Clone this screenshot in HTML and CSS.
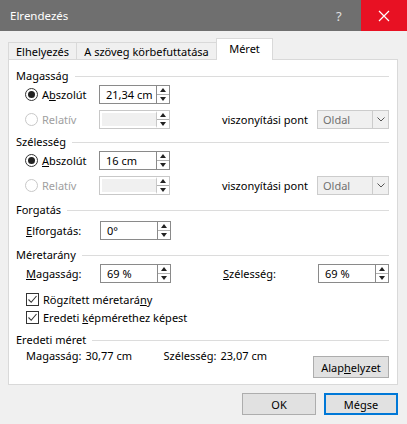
FILE: index.html
```html
<!DOCTYPE html>
<html lang="hu">

<head>
    <meta charset="UTF-8">
    <title>Elrendezés</title>
    <link rel="stylesheet" href="styles.css">
</head>

<body>
    <div class="window">
        <!-- Title bar -->
        <div class="titlebar">
            <span class="title">Elrendezés</span>
            <span class="help">?</span>
            <span class="close">
                <svg width="12" height="12" viewBox="0 0 12 12">
                    <path d="M1 1 L11 11 M11 1 L1 11" stroke="#fff" stroke-width="1.2" fill="none" />
                </svg>
            </span>
        </div>

        <div class="content">
            <!-- Tabs -->
            <div class="tabs">
                <div class="tab tab-first">Elhelyezés</div>
                <div class="tab">A szöveg körbefuttatása</div>
                <div class="tab active">Méret</div>
            </div>

            <div class="panel">
                <!-- Magasság -->
                <div class="group-title"><span>Magasság</span><i></i></div>
                <div class="row">
                    <span class="radio checked"></span>
                    <span class="lbl">A<u>b</u>szolút</span>
                    <div class="spin"><span class="field">21,34 cm</span><span class="arrows"><b class="up"></b><b class="down"></b></span></div>
                </div>
                <div class="row row-gap">
                    <span class="radio disabled"></span>
                    <span class="lbl disabled-text">Relatív</span>
                    <div class="spin off"><span class="field"></span><span class="arrows"><b class="up"></b><b class="down"></b></span></div>
                    <span class="rel-label">viszonyítási pont</span>
                    <div class="select"><span>Oldal</span><span class="drop"><svg width="8" height="5" viewBox="0 0 8 5"><path d="M0.5 0.5 L4 4 L7.5 0.5" stroke="#555" fill="none" /></svg></span></div>
                </div>

                <!-- Szélesség -->
                <div class="group-title gt-second"><span>Szélesség</span><i></i></div>
                <div class="row">
                    <span class="radio checked"></span>
                    <span class="lbl"><u>A</u>bszolút</span>
                    <div class="spin"><span class="field">16 cm</span><span class="arrows"><b class="up"></b><b class="down"></b></span></div>
                </div>
                <div class="row row-gap">
                    <span class="radio disabled"></span>
                    <span class="lbl disabled-text">Relatív</span>
                    <div class="spin off"><span class="field"></span><span class="arrows"><b class="up"></b><b class="down"></b></span></div>
                    <span class="rel-label">viszonyítási pont</span>
                    <div class="select"><span>Oldal</span><span class="drop"><svg width="8" height="5" viewBox="0 0 8 5"><path d="M0.5 0.5 L4 4 L7.5 0.5" stroke="#555" fill="none" /></svg></span></div>
                </div>

                <!-- Forgatás -->
                <div class="group-title gt-spaced"><span>Forgatás</span><i></i></div>
                <div class="row row-tight">
                    <span class="lbl wide"><u>E</u>lforgatás:</span>
                    <div class="spin"><span class="field">0°</span><span class="arrows"><b class="up"></b><b class="down"></b></span></div>
                </div>

                <!-- Méretarány -->
                <div class="group-title gt-spaced"><span>Méretarány</span><i></i></div>
                <div class="row row-flush">
                    <span class="lbl wide"><u>M</u>agasság:</span>
                    <div class="spin"><span class="field">69 %</span><span class="arrows"><b class="up"></b><b class="down"></b></span></div>
                    <span class="scale-label"><u>S</u>zélesség:</span>
                    <div class="spin"><span class="field">69 %</span><span class="arrows"><b class="up"></b><b class="down"></b></span></div>
                </div>
                <div class="check first-check">
                    <span class="box"><svg width="11" height="11" viewBox="0 0 11 11"><path d="M1.5 5.5 L4.2 8.3 L9.5 2" stroke="#333" stroke-width="1.1" fill="none" /></svg></span>
                    <span>Rögzített méretará<u>n</u>y</span>
                </div>
                <div class="check">
                    <span class="box"><svg width="11" height="11" viewBox="0 0 11 11"><path d="M1.5 5.5 L4.2 8.3 L9.5 2" stroke="#333" stroke-width="1.1" fill="none" /></svg></span>
                    <span>Eredeti <u>k</u>épmérethez képest</span>
                </div>

                <!-- Eredeti méret -->
                <div class="group-title gt-spaced"><span>Eredeti méret</span><i></i></div>
                <div class="orig">
                    <span class="o-label">Magasság:</span>
                    <span class="o-value">30,77 cm</span>
                    <span class="o-label">Szélesség:</span>
                    <span class="o-value">23,07 cm</span>
                    <button class="btn reset">Alap<u>h</u>elyzet</button>
                </div>
            </div>

            <!-- Dialog buttons -->
            <div class="actions">
                <button class="btn">OK</button>
                <button class="btn default">Mégse</button>
            </div>
        </div>
    </div>
</body>

</html>
```

FILE: styles.css
```css
body {
    margin: 0;
    background-color: #f0f0f0;
    font-family: "Noto Sans", "Open Sans", sans-serif;
    font-size: 11px;
    color: #000;
}

.window {
    width: 407px;
    height: 424px;
    overflow: hidden;
}

.titlebar {
    height: 31px;
    background-color: #6f6f6f;
    display: flex;
    align-items: center;
    color: #fff;
}

.title {
    margin-left: 10px;
    flex: 1;
    font-size: 11.5px;
}

.help {
    color: #e0e0e0;
    width: 23px;
    margin-right: 2px;
    font-size: 13px;
}

.close {
    width: 46px;
    height: 31px;
    background-color: #e81123;
    display: flex;
    align-items: center;
    justify-content: center;
}

.close svg {
    display: block;
}

.content {
    padding: 7px 9px 0 8px;
}

.tabs {
    display: flex;
    align-items: flex-end;
    height: 22px;
    position: relative;
    z-index: 1;
    margin-bottom: -1px;
}

.tab {
    height: 18px;
    line-height: 17px;
    border: 1px solid #d9d9d9;
    border-left: none;
    border-bottom: none;
    box-sizing: border-box;
    white-space: nowrap;
    text-align: center;
}

.tab-first {
    border-left: 1px solid #d9d9d9;
    width: 69px;
}

.tab:nth-child(2) {
    width: 140px;
}

.tab.active {
    background-color: #fff;
    height: 22px;
    line-height: 20px;
    width: 57px;
    border-left: 1px solid #d9d9d9;
    margin-left: -1px;
}

.panel {
    background-color: #fff;
    border: 1px solid #d9d9d9;
    width: 390px;
    height: 326px;
    box-sizing: border-box;
    padding: 9px 8px 0 7px;
}

.group-title {
    display: flex;
    align-items: center;
    height: 14px;
    line-height: 14px;
}

.group-title i {
    flex: 1;
    height: 1px;
    background-color: #dcdcdc;
    margin-left: 6px;
}

.gt-second {
    margin-top: 6px;
}

.gt-spaced {
    margin-top: 8px;
}

.row {
    display: flex;
    align-items: center;
    height: 20px;
    padding-left: 9px;
    margin-top: 1px;
}

.row-gap {
    margin-top: 5px;
}

.row-tight {
    margin-top: 3px;
    padding-left: 10px;
}

.row-flush {
    margin-top: 1px;
    padding-left: 10px;
}

.radio {
    width: 13px;
    height: 13px;
    border: 1px solid #333;
    border-radius: 50%;
    box-sizing: border-box;
    display: flex;
    align-items: center;
    justify-content: center;
    margin-right: 4px;
}

.radio.checked::after {
    content: "";
    width: 7px;
    height: 7px;
    border-radius: 50%;
    background-color: #222;
}

.radio.disabled {
    border-color: #c8c8c8;
}

.lbl {
    width: 57px;
}

.lbl.wide {
    width: 74px;
}

.disabled-text {
    color: #a0a0a0;
}

.spin {
    display: flex;
    width: 71px;
    height: 19px;
    border: 1px solid #8a8a8a;
    box-sizing: border-box;
    background-color: #fff;
}

.spin .field {
    flex: 1;
    padding-left: 6px;
    line-height: 17px;
    border-right: 1px solid #8a8a8a;
}

.spin.off {
    border-color: #c8c8c8;
}

.spin.off .field {
    background-color: #f0f0f0;
    border: 2px solid #fff;
    border-right: 1px solid #c8c8c8;
}

.arrows {
    width: 12px;
    display: flex;
    flex-direction: column;
}

.arrows b {
    flex: 1;
    display: flex;
    align-items: center;
    justify-content: center;
}

.arrows .up {
    border-bottom: 1px solid #b0b0b0;
}

.arrows .up::after {
    content: "";
    border-left: 3px solid transparent;
    border-right: 3px solid transparent;
    border-bottom: 4px solid #222;
}

.arrows .down::after {
    content: "";
    border-left: 3px solid transparent;
    border-right: 3px solid transparent;
    border-top: 4px solid #222;
}

.rel-label {
    margin-left: auto;
    margin-right: 9px;
}

.select {
    display: flex;
    width: 72px;
    height: 19px;
    border: 1px solid #cccccc;
    box-sizing: border-box;
    background-color: #f0f0f0;
    color: #707070;
}

.select span:first-child {
    flex: 1;
    padding-left: 5px;
    line-height: 17px;
}

.select .drop {
    width: 15px;
    border-left: 1px solid #cccccc;
    display: flex;
    align-items: center;
    justify-content: center;
}

.scale-label {
    margin-left: 52px;
    width: 95px;
}

.check {
    display: flex;
    align-items: center;
    height: 16px;
    padding-left: 10px;
    margin-top: 2px;
}

.first-check {
    margin-top: 8px;
}

.box {
    width: 13px;
    height: 13px;
    border: 1px solid #333;
    box-sizing: border-box;
    margin-right: 4px;
    display: flex;
    align-items: center;
    justify-content: center;
}

.box svg {
    display: block;
}

.orig {
    display: flex;
    align-items: flex-start;
    padding-left: 10px;
    line-height: 16px;
    margin-top: 1px;
}

.o-label {
    margin-right: 4px;
}

.o-value {
    width: 78px;
}

.btn {
    font-family: inherit;
    font-size: 11px;
    color: #000;
    background-color: #e1e1e1;
    border: 1px solid #adadad;
    height: 22px;
    padding: 0;
}

.reset {
    margin-left: auto;
    margin-top: 8px;
    width: 76px;
}

.actions {
    display: flex;
    justify-content: flex-end;
    gap: 8px;
    margin-top: 8px;
}

.actions .btn {
    width: 74px;
    height: 22px;
}

.actions .default {
    border: 2px solid #0078d7;
}
```
